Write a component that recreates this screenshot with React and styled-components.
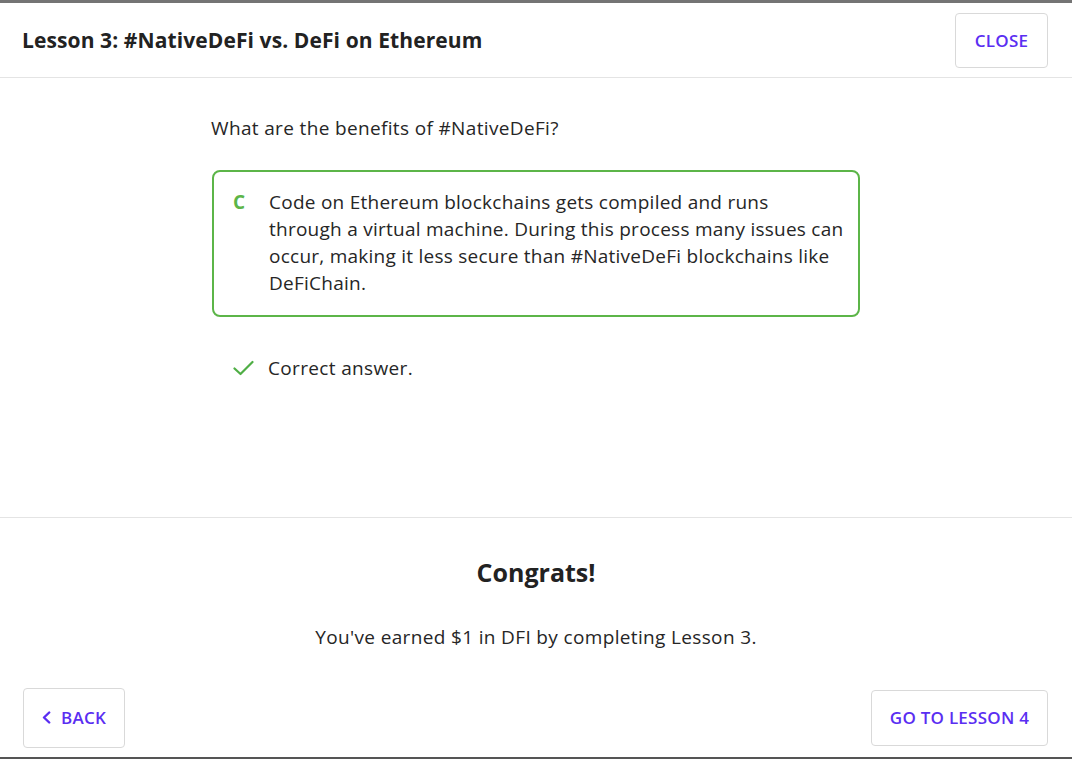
import React from "react";
import styled, { createGlobalStyle } from "styled-components";

const GlobalStyle = createGlobalStyle`
  html, body { margin: 0; padding: 0; background: #ffffff; }
  body {
    font-family: "Open Sans", "Noto Sans", "Liberation Sans", sans-serif;
    color: #262626;
    -webkit-font-smoothing: antialiased;
  }
  * { box-sizing: border-box; }
`;

const Page = styled.div`
  height: 759px;
  display: flex;
  flex-direction: column;
  background: #fff;
`;

const EdgeBar = styled.div`
  height: ${(p) => p.$h}px;
  background: ${(p) => p.$color};
  flex-shrink: 0;
`;

const Header = styled.header`
  height: 75px;
  flex-shrink: 0;
  display: flex;
  align-items: center;
  justify-content: space-between;
  padding: 0 24px 0 22px;
  border-bottom: 1px solid #e4e4e4;
`;

const Title = styled.h1`
  margin: 0;
  font-size: 21px;
  font-weight: 700;
  color: #222;
  letter-spacing: 0.1px;
`;

const OutlineButton = styled.button`
  display: inline-flex;
  align-items: center;
  justify-content: center;
  gap: 10px;
  height: ${(p) => p.$h || 55}px;
  width: ${(p) => p.$w}px;
  padding: 0;
  border: 1px solid #d9d9d9;
  border-radius: 4px;
  background: #fff;
  color: #5a2ef2;
  font-family: inherit;
  font-size: 17px;
  font-weight: 600;
  letter-spacing: 0.25px;
  text-transform: uppercase;
  cursor: pointer;
`;

const Main = styled.main`
  flex: 1;
  padding-top: 38px;
  display: flex;
  justify-content: center;
`;

const Content = styled.div`
  width: 648px;
  display: flex;
  flex-direction: column;
`;

const BodyText = styled.p`
  margin: 0;
  font-size: 19px;
  line-height: ${(p) => p.$lh || 24}px;
  letter-spacing: ${(p) => p.$ls ?? 0.35}px;
  white-space: ${(p) => (p.$nowrap ? "nowrap" : "normal")};
  color: #262626;
`;

const Question = styled(BodyText)`
  margin: 0 0 30px;
  margin-left: -1px;
`;

const AnswerCard = styled.div`
  display: flex;
  border: 2px solid #5cb548;
  border-radius: 8px;
  padding: 17px 12px 18px 18px;
`;

const AnswerLetter = styled.span`
  width: 37px;
  flex-shrink: 0;
  font-size: 19px;
  line-height: 27px;
  font-weight: 700;
  color: #5cb548;
  padding-left: 1px;
`;

const Feedback = styled.div`
  display: flex;
  align-items: center;
  gap: 14px;
  margin-top: 39px;
  padding-left: 21px;
`;

const Congrats = styled.section`
  flex-shrink: 0;
  border-top: 1px solid #e4e4e4;
  padding-top: 38px;
  display: flex;
  flex-direction: column;
  align-items: center;
`;

const CongratsTitle = styled.h2`
  margin: 0;
  font-size: 25px;
  line-height: 32px;
  font-weight: 700;
  color: #222;
`;

const CongratsText = styled(BodyText)`
  margin-top: 37px;
`;

const Footer = styled.footer`
  flex-shrink: 0;
  height: 108px;
  display: flex;
  align-items: center;
  justify-content: space-between;
  padding: 29px 24px 0 23px;
`;

const CheckIcon = () => (
  <svg width="21" height="16" viewBox="0 0 21 16" fill="none">
    <path d="M1.5 8.5 L7.5 14 L19.5 2" stroke="#4fae45" strokeWidth="2.2" strokeLinecap="round" strokeLinejoin="round" />
  </svg>
);

const ChevronLeft = () => (
  <svg width="9" height="13" viewBox="0 0 9 13" fill="none">
    <path d="M7.2 1.5 L2 6.5 L7.2 11.5" stroke="#5a2ef2" strokeWidth="2.4" strokeLinecap="round" strokeLinejoin="round" />
  </svg>
);

export default function App() {
  return (
    <Page>
      <GlobalStyle />
      <EdgeBar $h={3} $color="#747474" />
      <Header>
        <Title>Lesson 3: #NativeDeFi vs. DeFi on Ethereum</Title>
        <OutlineButton $w={93}>Close</OutlineButton>
      </Header>
      <Main>
        <Content>
          <Question>What are the benefits of #NativeDeFi?</Question>
          <AnswerCard>
            <AnswerLetter>C</AnswerLetter>
            <BodyText $lh={27} $ls={0.25} $nowrap>
              Code on Ethereum blockchains gets compiled and runs
              <br />
              through a virtual machine. During this process many issues can
              <br />
              occur, making it less secure than #NativeDeFi blockchains like
              <br />
              DeFiChain.
            </BodyText>
          </AnswerCard>
          <Feedback>
            <CheckIcon />
            <BodyText as="span">Correct answer.</BodyText>
          </Feedback>
        </Content>
      </Main>
      <Congrats>
        <CongratsTitle>Congrats!</CongratsTitle>
        <CongratsText>You've earned $1 in DFI by completing Lesson 3.</CongratsText>
      </Congrats>
      <Footer>
        <OutlineButton $w={102} $h={60}>
          <ChevronLeft />
          Back
        </OutlineButton>
        <OutlineButton $w={177} $h={56}>Go to Lesson 4</OutlineButton>
      </Footer>
      <EdgeBar $h={2} $color="#555" />
    </Page>
  );
}
